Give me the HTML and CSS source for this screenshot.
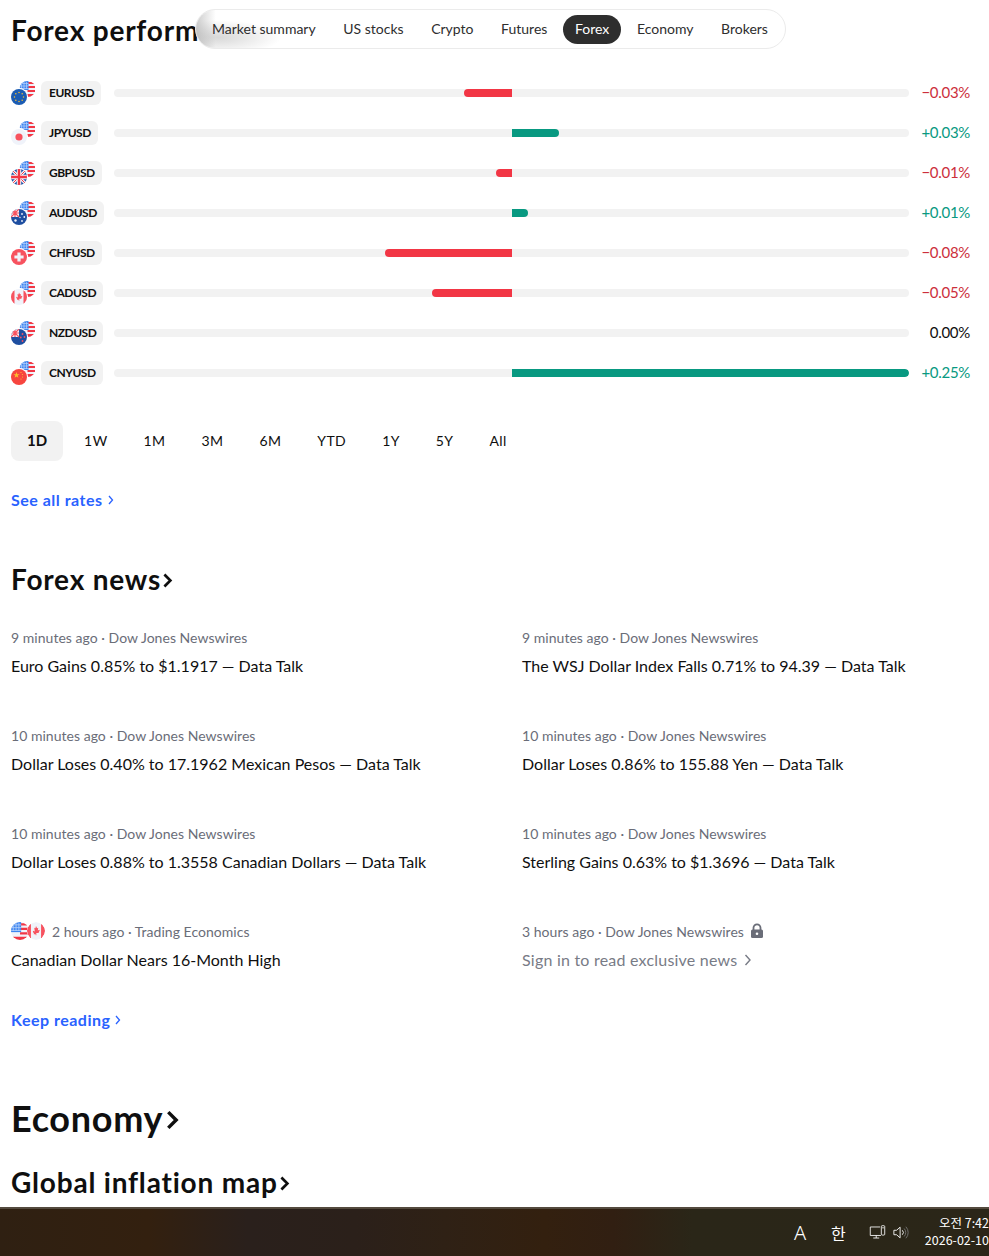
FILE: index.html
```html
<!DOCTYPE html>
<html lang="en">
<head>
<meta charset="utf-8">
<title>Forex performance</title>
<link rel="stylesheet" href="styles.css">
</head>
<body>
<svg class="sprite" aria-hidden="true">
  <defs>
    <clipPath id="round"><circle cx="8" cy="8" r="8"/></clipPath>
    <symbol id="f-us" viewBox="0 0 16 16"><g clip-path="url(#round)">
      <rect width="16" height="16" fill="#f0f3fa"/>
      <path d="M8 1h8v2H8zM8 5h8v2H8zM8 9h8v2H8zM0 13h16v3H0z" fill="#f23645"/>
      <rect width="9" height="9" fill="#3f86f0"/>
      <path d="M2 1v7M4.500 1v7M7 1v7M0 2.500h9M0 5h9M0 7.500h9" stroke="#b9d3fa" stroke-width=".7"/>
    </g></symbol>
    <symbol id="f-eu" viewBox="0 0 16 16"><g clip-path="url(#round)">
      <rect width="16" height="16" fill="#1b5cb3"/>
      <g fill="#fbc02d"><circle cx="8" cy="3.500" r=".75"/><circle cx="8" cy="12.500" r=".75"/><circle cx="3.500" cy="8" r=".75"/><circle cx="12.500" cy="8" r=".75"/><circle cx="4.800" cy="4.800" r=".75"/><circle cx="11.200" cy="4.800" r=".75"/><circle cx="4.800" cy="11.200" r=".75"/><circle cx="11.200" cy="11.200" r=".75"/></g>
    </g></symbol>
    <symbol id="f-jp" viewBox="0 0 16 16"><g clip-path="url(#round)">
      <rect width="16" height="16" fill="#f0f3fa"/><circle cx="8" cy="8" r="3.600" fill="#f7525f"/>
    </g></symbol>
    <symbol id="f-uk" viewBox="0 0 16 16"><g clip-path="url(#round)">
      <rect width="16" height="16" fill="#1e53a5"/>
      <path d="M0 0L16 16M16 0L0 16" stroke="#f0f3fa" stroke-width="3"/>
      <path d="M0 0L16 16M16 0L0 16" stroke="#f23645" stroke-width="1"/>
      <path d="M8 0v16M0 8h16" stroke="#f0f3fa" stroke-width="4.400"/>
      <path d="M8 0v16M0 8h16" stroke="#f23645" stroke-width="2.400"/>
    </g></symbol>
    <symbol id="f-au" viewBox="0 0 16 16"><g clip-path="url(#round)">
      <rect width="16" height="16" fill="#1e4ea0"/>
      <rect width="8" height="8" fill="#f0f3fa"/>
      <path d="M0 0L8 8M8 0L0 8M4 0v8M0 4h8" stroke="#f7525f" stroke-width="1.200"/>
      <g fill="#f0f3fa"><circle cx="11" cy="5" r=".9"/><circle cx="13.300" cy="8" r=".9"/><circle cx="11" cy="12" r=".9"/><circle cx="4.500" cy="11.500" r="1.200"/><circle cx="9" cy="8.500" r=".7"/></g>
    </g></symbol>
    <symbol id="f-ch" viewBox="0 0 16 16"><g clip-path="url(#round)">
      <rect width="16" height="16" fill="#f7525f"/>
      <path d="M6.400 3.400h3.200v3h3v3.200h-3v3H6.400v-3h-3V6.400h3z" fill="#f0f3fa"/>
    </g></symbol>
    <symbol id="f-ca" viewBox="0 0 16 16"><g clip-path="url(#round)">
      <rect width="16" height="16" fill="#f0f3fa"/>
      <rect width="3.500" height="16" fill="#f7525f"/><rect x="12.500" width="3.500" height="16" fill="#f7525f"/>
      <path d="M8 3.600l1 1.900 1-.4-.4 2.400 1.400-.7.300 1-1 1.300.3.700H8.300v1.900h-.6V10.800H5.900l.3-.7-1-1.300.3-1 1.400.7L6.500 5.100l1 .4z" fill="#f7525f"/>
    </g></symbol>
    <symbol id="f-nz" viewBox="0 0 16 16"><g clip-path="url(#round)">
      <rect width="16" height="16" fill="#1e4ea0"/>
      <rect width="8" height="8" fill="#f0f3fa"/>
      <path d="M0 0L8 8M8 0L0 8M4 0v8M0 4h8" stroke="#f7525f" stroke-width="1.200"/>
      <g fill="#f7525f"><circle cx="11.500" cy="5" r=".9"/><circle cx="13.500" cy="8" r=".9"/><circle cx="9.800" cy="8.500" r=".9"/><circle cx="11.500" cy="12" r=".9"/></g>
    </g></symbol>
    <symbol id="f-cn" viewBox="0 0 16 16"><g clip-path="url(#round)">
      <rect width="16" height="16" fill="#f7453f"/>
      <path d="M5.500 3l.8 2.200 2.300 0-1.900 1.400.700 2.200-1.900-1.300-1.900 1.300.700-2.200-1.900-1.400 2.300 0z" fill="#fbc02d"/>
      <g fill="#fbc02d"><circle cx="10" cy="3.500" r=".6"/><circle cx="11.500" cy="5.500" r=".6"/><circle cx="11.500" cy="8" r=".6"/><circle cx="10" cy="10" r=".6"/></g>
    </g></symbol>
    <symbol id="pair-base" viewBox="0 0 24 24">
      <use href="#f-us" x="8.500" y="0" width="16" height="16"/>
      <circle cx="8" cy="16" r="9.200" fill="#fff"/>
    </symbol>
  </defs>
</svg>

<main class="page">
  <nav class="tabs">
    <span class="tab-smear"></span>
    <a class="tab">Market summary</a>
    <a class="tab">US stocks</a>
    <a class="tab">Crypto</a>
    <a class="tab">Futures</a>
    <a class="tab tab-active">Forex</a>
    <a class="tab">Economy</a>
    <a class="tab">Brokers</a>
  </nav>

  <h2 class="title">Forex performance</h2>

  <section class="rates">
    <div class="rate">
      <svg class="pair" viewBox="0 0 24 24"><use href="#pair-base"/><use href="#f-eu" x="0" y="8" width="16" height="16"/></svg>
      <span class="chip">EURUSD</span>
      <div class="track"><div class="half half-neg"><div class="fill fill-neg" style="width:12%"></div></div><div class="half"></div></div>
      <span class="val neg">−0.03%</span>
    </div>
    <div class="rate">
      <svg class="pair" viewBox="0 0 24 24"><use href="#pair-base"/><use href="#f-jp" x="0" y="8" width="16" height="16"/></svg>
      <span class="chip">JPYUSD</span>
      <div class="track"><div class="half half-neg"></div><div class="half"><div class="fill fill-pos" style="width:12%"></div></div></div>
      <span class="val pos">+0.03%</span>
    </div>
    <div class="rate">
      <svg class="pair" viewBox="0 0 24 24"><use href="#pair-base"/><use href="#f-uk" x="0" y="8" width="16" height="16"/></svg>
      <span class="chip">GBPUSD</span>
      <div class="track"><div class="half half-neg"><div class="fill fill-neg" style="width:4%"></div></div><div class="half"></div></div>
      <span class="val neg">−0.01%</span>
    </div>
    <div class="rate">
      <svg class="pair" viewBox="0 0 24 24"><use href="#pair-base"/><use href="#f-au" x="0" y="8" width="16" height="16"/></svg>
      <span class="chip">AUDUSD</span>
      <div class="track"><div class="half half-neg"></div><div class="half"><div class="fill fill-pos" style="width:4.1%"></div></div></div>
      <span class="val pos">+0.01%</span>
    </div>
    <div class="rate">
      <svg class="pair" viewBox="0 0 24 24"><use href="#pair-base"/><use href="#f-ch" x="0" y="8" width="16" height="16"/></svg>
      <span class="chip">CHFUSD</span>
      <div class="track"><div class="half half-neg"><div class="fill fill-neg" style="width:31.9%"></div></div><div class="half"></div></div>
      <span class="val neg">−0.08%</span>
    </div>
    <div class="rate">
      <svg class="pair" viewBox="0 0 24 24"><use href="#pair-base"/><use href="#f-ca" x="0" y="8" width="16" height="16"/></svg>
      <span class="chip">CADUSD</span>
      <div class="track"><div class="half half-neg"><div class="fill fill-neg" style="width:20%"></div></div><div class="half"></div></div>
      <span class="val neg">−0.05%</span>
    </div>
    <div class="rate">
      <svg class="pair" viewBox="0 0 24 24"><use href="#pair-base"/><use href="#f-nz" x="0" y="8" width="16" height="16"/></svg>
      <span class="chip">NZDUSD</span>
      <div class="track"><div class="half half-neg"></div><div class="half"></div></div>
      <span class="val">0.00%</span>
    </div>
    <div class="rate">
      <svg class="pair" viewBox="0 0 24 24"><use href="#pair-base"/><use href="#f-cn" x="0" y="8" width="16" height="16"/></svg>
      <span class="chip">CNYUSD</span>
      <div class="track"><div class="half half-neg"></div><div class="half"><div class="fill fill-pos" style="width:100%"></div></div></div>
      <span class="val pos">+0.25%</span>
    </div>
  </section>

  <div class="ranges">
    <span class="range range-active">1D</span>
    <span class="range">1W</span>
    <span class="range">1M</span>
    <span class="range">3M</span>
    <span class="range">6M</span>
    <span class="range">YTD</span>
    <span class="range">1Y</span>
    <span class="range">5Y</span>
    <span class="range">All</span>
  </div>

  <a class="more more-rates">See all rates <svg class="more-ico" viewBox="0 0 6 10"><path d="M1 1l3.500 4L1 9" /></svg></a>

  <h2 class="h-news">Forex news<svg class="h-ico" viewBox="0 0 10 14"><path d="M2 2l5 5-5 5"/></svg></h2>

  <section class="news">
    <article class="item">
      <div class="meta">9 minutes ago · Dow Jones Newswires</div>
      <div class="head">Euro Gains 0.85% to $1.1917 — Data Talk</div>
    </article>
    <article class="item">
      <div class="meta">9 minutes ago · Dow Jones Newswires</div>
      <div class="head">The WSJ Dollar Index Falls 0.71% to 94.39 — Data Talk</div>
    </article>
    <article class="item">
      <div class="meta">10 minutes ago · Dow Jones Newswires</div>
      <div class="head">Dollar Loses 0.40% to 17.1962 Mexican Pesos — Data Talk</div>
    </article>
    <article class="item">
      <div class="meta">10 minutes ago · Dow Jones Newswires</div>
      <div class="head">Dollar Loses 0.86% to 155.88 Yen — Data Talk</div>
    </article>
    <article class="item">
      <div class="meta">10 minutes ago · Dow Jones Newswires</div>
      <div class="head">Dollar Loses 0.88% to 1.3558 Canadian Dollars — Data Talk</div>
    </article>
    <article class="item">
      <div class="meta">10 minutes ago · Dow Jones Newswires</div>
      <div class="head">Sterling Gains 0.63% to $1.3696 — Data Talk</div>
    </article>
    <article class="item">
      <div class="meta"><span class="mini-flags"><svg class="mini" viewBox="0 0 16 16"><use href="#f-us"/></svg><svg class="mini mini-over" viewBox="0 0 16 16"><use href="#f-ca"/></svg></span><span>2 hours ago · Trading Economics</span></div>
      <div class="head">Canadian Dollar Nears 16-Month High</div>
    </article>
    <article class="item">
      <div class="meta"><span>3 hours ago · Dow Jones Newswires</span><svg class="lock" viewBox="0 0 14 16"><path d="M3.500 7V4.800a3.500 3.500 0 0 1 7 0V7" fill="none" stroke="#6a6d78" stroke-width="1.800"/><rect x="1" y="6.500" width="12" height="8.500" rx="1.500" fill="#6a6d78"/><circle cx="7" cy="10.700" r="1.300" fill="#fff"/></svg></div>
      <div class="head head-muted"><span>Sign in to read exclusive news</span><svg class="sign-ico" viewBox="0 0 8 12"><path d="M1.500 1l4.500 5-4.500 5"/></svg></div>
    </article>
  </section>

  <a class="more more-news">Keep reading <svg class="more-ico" viewBox="0 0 6 10"><path d="M1 1l3.500 4L1 9" /></svg></a>

  <h1 class="h-eco">Economy<svg class="h-ico h-ico-l" viewBox="0 0 10 14"><path d="M2 2l5 5-5 5"/></svg></h1>
  <h2 class="h-map">Global inflation map<svg class="h-ico" viewBox="0 0 10 14"><path d="M2 2l5 5-5 5"/></svg></h2>
</main>

<footer class="taskbar">
  <span class="tray-a">A</span>
  <span class="tray-han">한</span>
  <svg class="tray-net" viewBox="0 0 20 18"><path d="M13 2.500H1.500v10H14M5 15.500h7M8.500 12.500v3" fill="none" stroke="#fff" stroke-width="1"/><rect x="14.500" y="1" width="4" height="11" rx="1" fill="none" stroke="#fff"/><path d="M15.500 3.500h2" stroke="#fff"/></svg>
  <svg class="tray-vol" viewBox="0 0 18 16"><path d="M1 5.500h3L8 2v12l-4-3.500H1z" fill="none" stroke="#fff"/><path d="M10.500 5.500a3.500 3.500 0 0 1 0 5" fill="none" stroke="#fff"/><path d="M12.500 3.500a6.500 6.500 0 0 1 0 9M14.500 1.500a9.500 9.500 0 0 1 0 13" fill="none" stroke="#777"/></svg>
  <div class="clock"><div>오전 7:42</div><div>2026-02-10</div></div>
</footer>
</body>
</html>
```

FILE: styles.css
```css
* { box-sizing: border-box; }

html, body { margin: 0; height: 100%; }

body {
  width: 989px;
  height: 1256px;
  overflow: hidden;
  display: flex;
  flex-direction: column;
  background: #fff;
  color: #0f0f0f;
  font-family: "Lato", "Noto Sans", "Liberation Sans", sans-serif;
}

.sprite { width: 0; height: 0; display: block; flex: none; }

.page {
  position: relative;
  flex: 1;
  min-height: 0;
  overflow: hidden;
  padding: 0 19px 0 11px;
}

/* sticky pill nav overlapping the heading */
.tabs {
  position: absolute;
  top: 9px;
  left: 195px;
  width: 591px;
  height: 40px;
  display: flex;
  align-items: center;
  gap: 3.6px;
  padding: 0 4px;
  background: #fff;
  border: 1px solid #ebebeb;
  border-radius: 20px;
  overflow: hidden;
  z-index: 2;
}
.tab {
  position: relative;
  height: 29px;
  line-height: 27px;
  padding: 0 12px;
  border-radius: 15px;
  font-size: 14px;
  color: #2e2e2e;
  white-space: nowrap;
}
.tab-active { background: #2e2e2e; color: #fff; }
.tab-smear {
  position: absolute;
  left: 0;
  top: 0;
  width: 90px;
  height: 38px;
  background:
    linear-gradient(90deg, rgba(170,170,170,.6), rgba(255,255,255,0) 22%),
    radial-gradient(ellipse 70% 45% at 25% 72%, rgba(190,190,190,.6), rgba(255,255,255,0));
}

.title {
  margin: 0;
  padding-top: 13px;
  height: 73px;
  font-size: 28px;
  line-height: 34px;
  font-weight: 700;
  letter-spacing: .8px;
  white-space: nowrap;
}

.rate {
  display: grid;
  grid-template-columns: 30px 73px 1fr 61px;
  align-items: center;
  height: 40px;
}
.pair { width: 24px; height: 24px; display: block; }
.chip {
  justify-self: start;
  height: 24px;
  line-height: 24px;
  padding: 0 7px 0 8px;
  background: #f2f2f2;
  border-radius: 6px;
  font-size: 12px;
  font-weight: 700;
  letter-spacing: -.5px;
}
.track {
  display: flex;
  height: 8px;
  background: #f2f2f2;
  border-radius: 4px;
  overflow: hidden;
}
.half { flex: 1; display: flex; }
.half-neg { justify-content: flex-end; }
.fill { height: 100%; }
.fill-neg { background: #f23645; border-radius: 4px 0 0 4px; }
.fill-pos { background: #089981; border-radius: 0 4px 4px 0; }
.val { text-align: right; font-size: 15px; line-height: 18px; letter-spacing: -.3px; margin-bottom: 2px; }
.neg { color: #cc2f3c; }
.pos { color: #089981; }

.ranges {
  display: flex;
  gap: 4px;
  margin-top: 28px;
}
.range {
  height: 40px;
  line-height: 39px;
  padding: 0 16px;
  border-radius: 8px;
  font-size: 14px;
  letter-spacing: .4px;
}
.range-active { background: #f2f2f2; font-weight: 700; font-size: 15px; letter-spacing: 0; margin-right: 1px; }

.more {
  display: flex;
  align-items: center;
  gap: 5px;
  color: #2962ff;
  font-size: 16px;
  font-weight: 700;
  height: 24px;
  letter-spacing: .5px;
}
.more-rates { margin-top: 26px; }
.more-ico { width: 6px; height: 10px; margin-top: 2px; fill: none; stroke: currentColor; stroke-width: 1.300; }

.h-news, .h-map {
  display: flex;
  align-items: center;
  margin: 0;
  font-size: 28px;
  line-height: 36px;
  font-weight: 700;
  letter-spacing: .8px;
  white-space: nowrap;
}
.h-news { margin-top: 50px; }
.h-ico { width: 12px; height: 17px; margin-left: 1px; margin-top: 2px; fill: none; stroke: #0f0f0f; stroke-width: 2.200; }
.h-ico-l { width: 16px; height: 22px; margin-left: 2px; margin-top: 4px; }

.news {
  display: grid;
  grid-template-columns: 511px 1fr;
  grid-auto-rows: 98px;
  margin-top: 28px;
}
.meta {
  display: flex;
  align-items: center;
  height: 24px;
  font-size: 14px;
  letter-spacing: .03px;
  color: #6a6d78;
  white-space: nowrap;
}
.head {
  display: flex;
  align-items: center;
  height: 32px;
  font-size: 16px;
  color: #0f0f0f;
  white-space: nowrap;
}
.head-muted { color: #787b86; letter-spacing: .22px; }
.mini-flags { display: flex; margin-right: 7px; }
.mini { width: 18px; height: 18px; display: block; }
.mini-over { margin-left: -2px; border-radius: 50%; background: #fff; }
.lock { width: 14px; height: 16px; margin-left: 6px; }
.sign-ico { width: 8px; height: 12px; margin-left: 7px; margin-top: 2px; fill: none; stroke: #787b86; stroke-width: 1.400; }

.more-news { margin-top: -10px; }

.h-eco {
  display: flex;
  align-items: center;
  margin: 65px 0 0;
  font-size: 36px;
  line-height: 44px;
  font-weight: 700;
  letter-spacing: .7px;
}
.h-map { margin-top: 24px; }

.taskbar {
  flex: none;
  height: 49px;
  display: flex;
  align-items: center;
  overflow: hidden;
  padding-left: 794px;
  border-top: 2px solid #544a3e;
  background: linear-gradient(90deg, #2f2012 0%, #33200f 15%, #2a201c 25%, #2b201a 36%, #2f2115 45%, #33200f 55%, #311f12 62%, #2a2618 70%, #2b2618 100%);
  color: #fff;
  font-family: "Noto Sans CJK KR", "Noto Sans", sans-serif;
}
.tray-a { font-size: 20px; font-family: "Noto Sans", sans-serif; font-weight: 300; width: 37px; }
.tray-han { font-size: 16px; width: 38px; }
.tray-net { width: 17px; height: 17px; flex: none; }
.tray-vol { width: 16px; height: 15px; flex: none; margin-left: 7px; }
.clock {
  flex: none;
  width: 70px;
  margin-left: 10px;
  padding-bottom: 4px;
  text-align: right;
  font-size: 12.5px;
  line-height: 17px;
  white-space: nowrap;
}
```
